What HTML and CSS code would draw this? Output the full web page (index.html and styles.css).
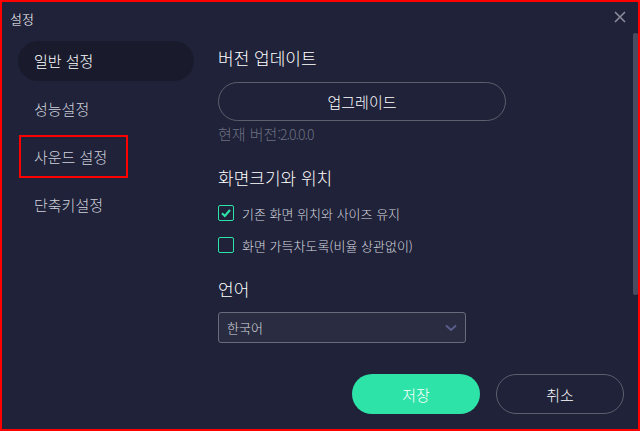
FILE: index.html
```html
<!DOCTYPE html>
<html lang="ko">
<head>
    <meta charset="UTF-8">
    <meta name="viewport" content="width=device-width, initial-scale=1.0">
    <title>설정</title>
    <link rel="stylesheet" href="styles.css">
</head>
<body>
    <div class="window">
        <div class="titlebar">
            <span class="title">설정</span>
            <button class="close" aria-label="닫기">
                <svg width="12" height="12" viewBox="0 0 12 12">
                    <path d="M1 1 L11 11 M11 1 L1 11" stroke="#8a8c9c" stroke-width="1.6" fill="none"/>
                </svg>
            </button>
        </div>
        <div class="main">
            <ul class="nav">
                <li class="nav-item active">일반 설정</li>
                <li class="nav-item">성능설정</li>
                <li class="nav-item marked">사운드 설정</li>
                <li class="nav-item">단축키설정</li>
            </ul>
            <div class="content">
                <h2>버전 업데이트</h2>
                <button class="btn-outline upgrade">업그레이드</button>
                <p class="version">현재 버전<span class="num">:2.0.0.0</span></p>

                <h2 class="section">화면크기와 위치</h2>
                <label class="check first">
                    <span class="box">
                        <svg width="12" height="12" viewBox="0 0 12 12">
                            <path d="M2 6.2 L4.8 9 L10 3" stroke="#2ee3a8" stroke-width="2.2" fill="none"/>
                        </svg>
                    </span>
                    기존 화면 위치와 사이즈 유지
                </label>
                <label class="check">
                    <span class="box"></span>
                    화면 가득차도록(비율 상관없이)
                </label>

                <h2 class="section">언어</h2>
                <div class="select">
                    <span>한국어</span>
                    <svg width="12" height="8" viewBox="0 0 12 8">
                        <path d="M1 1.5 L6 6 L11 1.5" stroke="#5b5e8c" stroke-width="2" fill="none"/>
                    </svg>
                </div>

                <div class="actions">
                    <button class="btn-primary">저장</button>
                    <button class="btn-outline">취소</button>
                </div>
            </div>
        </div>
        <div class="scrollbar"></div>
    </div>
</body>
</html>
```

FILE: styles.css
```css
body {
    margin: 0;
    font-family: "Noto Sans CJK KR", "Noto Sans", sans-serif;
    font-weight: 300;
    background-color: #1f2238;
}
.window {
    position: relative;
    width: 640px;
    height: 431px;
    box-sizing: border-box;
    border: 2px solid #ff0000;
    background-color: #1f2238;
    color: #ffffff;
}
.titlebar {
    height: 32px;
    display: flex;
    align-items: center;
    justify-content: space-between;
    padding: 0 12px 0 8px;
}
.title {
    font-size: 13px;
    color: #ffffff;
}
.close {
    background: none;
    border: none;
    padding: 0;
    width: 12px;
    height: 12px;
    display: flex;
    margin-top: -2px;
}
.main {
    display: flex;
}
.nav {
    list-style: none;
    margin: 0;
    padding: 7px 24px 0 16px;
    width: 176px;
}
.nav-item {
    position: relative;
    height: 40px;
    line-height: 40px;
    padding-left: 16px;
    margin-bottom: 8px;
    border-radius: 20px;
    font-size: 15px;
    color: #cfd1dc;
}
.nav-item.active {
    background-color: #191b2d;
    color: #ffffff;
}
.nav-item.marked::after {
    content: "";
    position: absolute;
    left: 1px;
    top: -2px;
    width: 109px;
    height: 43px;
    box-sizing: border-box;
    border: 2px solid #ff0000;
}
.content {
    flex: 1;
    padding: 12px 14px 0 0;
}
h2 {
    margin: 0;
    font-size: 17px;
    line-height: 24px;
    font-weight: 300;
    color: #ffffff;
}
h2.section {
    margin-top: 22px;
}
.btn-outline {
    background: transparent;
    border: 1px solid #5d5f6d;
    border-radius: 20px;
    color: #ffffff;
    font-family: inherit;
    font-weight: 300;
    font-size: 15px;
    width: 128px;
    height: 40px;
    padding: 0;
}
.upgrade {
    display: block;
    margin-top: 12px;
    width: 288px;
    height: 39px;
}
.btn-primary {
    background-color: #2ee3a8;
    border: none;
    border-radius: 20px;
    color: #ffffff;
    font-family: inherit;
    font-weight: 300;
    font-size: 15px;
    width: 128px;
    height: 40px;
    padding: 0;
}
.version {
    margin: 3px 0 0;
    font-size: 15px;
    line-height: 20px;
    color: #6d7081;
}
.version .num {
    font-size: 14px;
    letter-spacing: -1px;
}
.check {
    display: flex;
    align-items: center;
    gap: 8px;
    height: 20px;
    margin-top: 12px;
    font-size: 13px;
    color: #d5d6df;
}
.check.first {
    margin-top: 13px;
}
.box {
    width: 16px;
    height: 16px;
    box-sizing: border-box;
    border: 1.5px solid #2ee3a8;
    border-radius: 2px;
    display: flex;
    align-items: center;
    justify-content: center;
}
.select {
    margin-top: 11px;
    width: 248px;
    height: 31px;
    box-sizing: border-box;
    border: 1px solid #696b7b;
    border-radius: 3px;
    background-color: #2a2d41;
    display: flex;
    align-items: center;
    justify-content: space-between;
    padding: 0 8px 0 8px;
    font-size: 13px;
    color: #d5d6df;
}
.actions {
    margin-top: 31px;
    display: flex;
    justify-content: flex-end;
    gap: 16px;
}
.scrollbar {
    position: absolute;
    left: 631px;
    top: 31px;
    width: 5px;
    height: 262px;
    border-radius: 2px;
    background-color: #4a4d62;
}
```
